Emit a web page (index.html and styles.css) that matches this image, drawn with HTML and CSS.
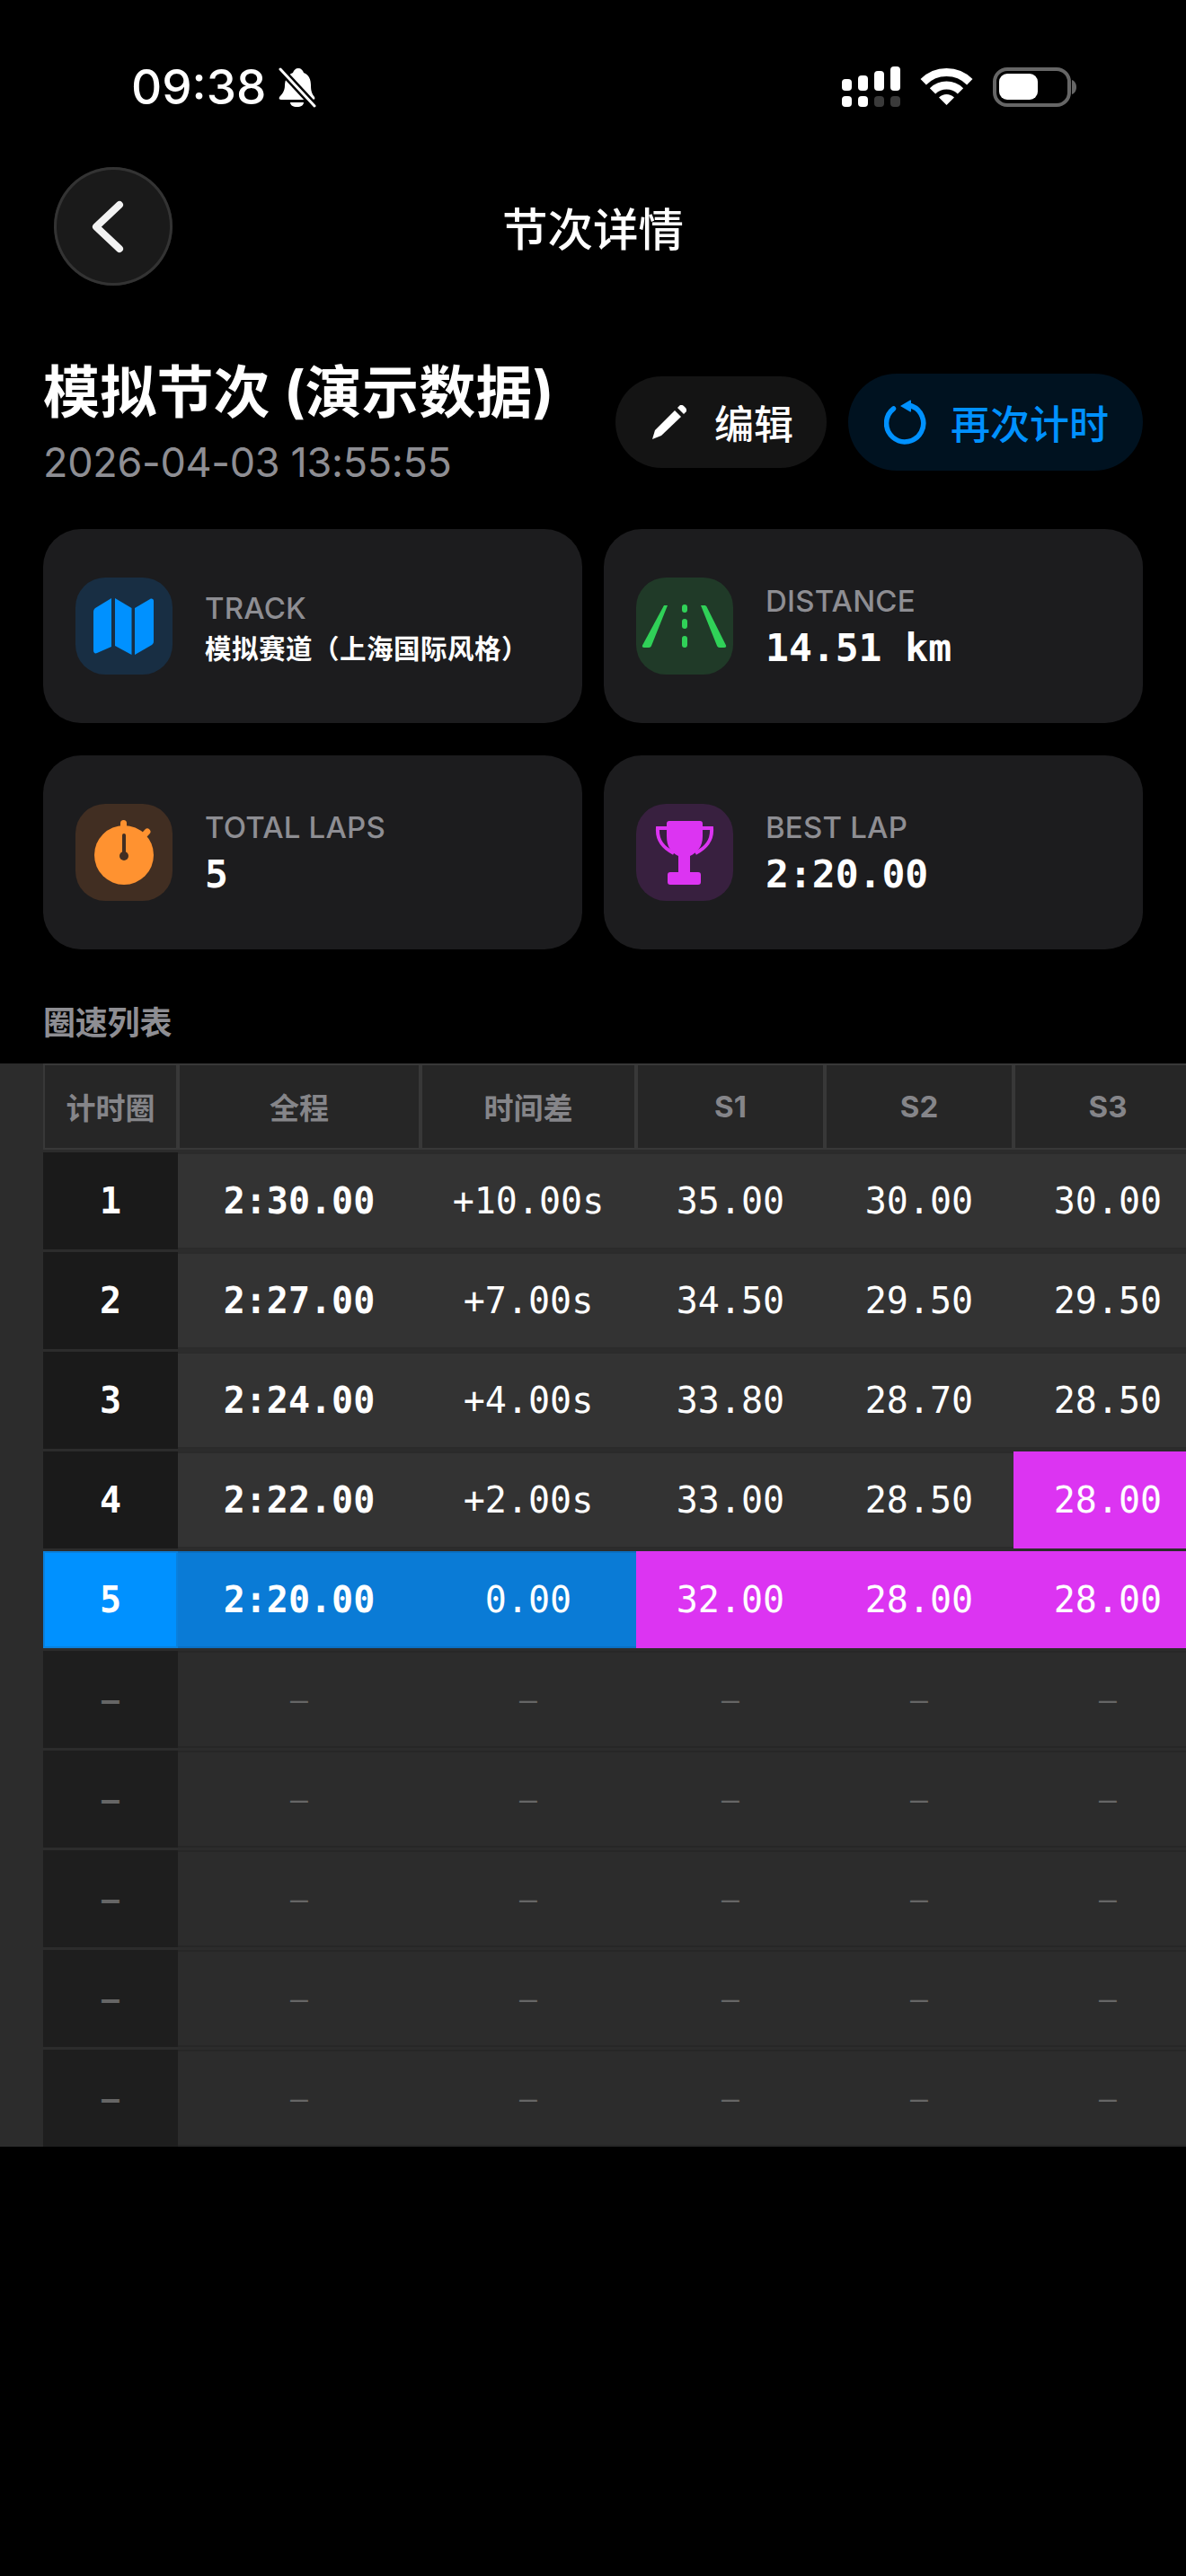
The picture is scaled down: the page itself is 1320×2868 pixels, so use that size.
FILE: index.html
```html
<!DOCTYPE html>
<html>
<head>
    <title>节次详情</title>
    <meta charset="UTF-8">
    <meta name="viewport" content="width=device-width, initial-scale=1">
    <link rel="stylesheet" href="styles.css">
</head>
<body>
    <div class="status-bar">
        <div class="status-left">
            <span class="status-time">09:38</span>
            <svg class="bell-icon" width="42" height="45" viewBox="0 0 42 45">
                <path d="M22 1c3 0 5 2 6 5 6 2 8 8 8 14 0 6 1 9 4 13 1 2 0 3-2 3H3c-2 0-3-1-2-3 3-3 6-7 6-13 0-6 3-12 9-14 1-3 3-5 6-5z" fill="#fff"/>
                <path d="M13 39h15c0 3-3 5-7.500 5S13 42 13 39z" fill="#fff"/>
                <path d="M1 1l40 43" stroke="#000" stroke-width="8"/>
                <path d="M2 2l38 41" stroke="#fff" stroke-width="3" stroke-linecap="round"/>
            </svg>
        </div>
        <svg class="status-right" width="261" height="46" viewBox="0 0 261 46">
            <rect x="0" y="14" width="11" height="13" rx="4" fill="#fff"/>
            <rect x="18" y="10" width="11" height="17" rx="4" fill="#fff"/>
            <rect x="36" y="5" width="11" height="22" rx="4" fill="#fff"/>
            <rect x="54" y="0" width="11" height="27" rx="4" fill="#fff"/>
            <rect x="0" y="33" width="11" height="12" rx="4" fill="#fff"/>
            <rect x="18" y="33" width="11" height="12" rx="4" fill="#fff"/>
            <rect x="36" y="33" width="11" height="12" rx="4" fill="#3a3a3a"/>
            <rect x="54" y="33" width="11" height="12" rx="4" fill="#3a3a3a"/>
            <path d="M90.700 17.200A36.500 36.500 0 0 1 142.300 17.200" fill="none" stroke="#fff" stroke-width="9"/>
            <path d="M101 27.400A22 22 0 0 1 132 27.400" fill="none" stroke="#fff" stroke-width="9"/>
            <path d="M116.500 43L108 34.500A12 12 0 0 1 125 34.500z" fill="#fff"/>
            <rect x="170" y="3" width="83" height="40" rx="14" fill="none" stroke="#666" stroke-width="4"/>
            <rect x="175" y="8" width="43" height="29" rx="9" fill="#fff"/>
            <path d="M256 15c3 1 5 4 5 8s-2 7-5 8z" fill="#666"/>
        </svg>
    </div>

    <div class="nav-bar">
        <div class="back-btn">
            <svg width="132" height="132" viewBox="0 0 132 132">
                <path d="M73 42L47 66.500 73 91" fill="none" stroke="#f2f2f2" stroke-width="8" stroke-linecap="round" stroke-linejoin="round"/>
            </svg>
        </div>
        <div class="nav-title">节次详情</div>
    </div>

    <div class="session-head">
        <div>
            <div class="session-title">模拟节次 (演示数据)</div>
            <div class="session-date">2026-04-03 13:55:55</div>
        </div>
        <div class="head-actions">
            <div class="action-btn edit-btn">
                <svg width="38" height="38" viewBox="0 0 38 38">
                    <path d="M0 38l3-10L25 6l7 7L10 34z" fill="#fff"/>
                    <path d="M28 3l3-3c1-1 3 0 5 2s3 4 2 5l-3 3z" fill="#fff"/>
                </svg>
                <span>编辑</span>
            </div>
            <div class="action-btn again-btn">
                <svg width="47" height="50" viewBox="0 0 47 50">
                    <path d="M29 6.500A20.600 20.600 0 1 1 10.500 10" fill="none" stroke="#0091ff" stroke-width="5.500" stroke-linecap="round"/>
                    <path d="M18 7L29 .5c.5-.3 1 0 1 .5v12c0 .5-.5.8-1 .5z" fill="#0091ff"/>
                </svg>
                <span>再次计时</span>
            </div>
        </div>
    </div>

    <div class="info-grid">
        <div class="info-card">
            <div class="info-icon icon-blue">
                <svg width="108" height="108" viewBox="0 0 108 108">
                    <path d="M20 38c0-2 1-3 2-4l18-11v54L24 84c-2 1-4 0-4-3z" fill="#0091ff"/>
                    <path d="M44 23l18.500 11v52L44 76z" fill="#0091ff"/>
                    <path d="M66 34l17-10c2-1 4 0 4 2v45c0 2-1 3-2 4L66 86z" fill="#0091ff"/>
                </svg>
            </div>
            <div class="info-text">
                <div class="info-label track-label">TRACK</div>
                <div class="info-name">模拟赛道（上海国际风格）</div>
            </div>
        </div>
        <div class="info-card">
            <div class="info-icon icon-green">
                <svg width="108" height="108" viewBox="0 0 108 108">
                    <path d="M31 31h4L17 76c-.5 1-1.500 2-3 2H9c-2 0-2.500-1-2-2.500z" fill="#30d158"/>
                    <path d="M72 31h4c1 0 2 .5 2.500 1.500L100 75.500c.5 1.500 0 2.500-2 2.500h-5c-1.500 0-2.500-1-3-2z" fill="#30d158"/>
                    <rect x="51" y="30" width="6" height="9" rx="3" fill="#30d158"/>
                    <rect x="51" y="46" width="6" height="11" rx="3" fill="#30d158"/>
                    <rect x="51" y="65" width="6" height="13" rx="3" fill="#30d158"/>
                </svg>
            </div>
            <div class="info-text">
                <div class="info-label">DISTANCE</div>
                <div class="info-value">14.51 km</div>
            </div>
        </div>
        <div class="info-card">
            <div class="info-icon icon-orange">
                <svg width="108" height="108" viewBox="0 0 108 108">
                    <rect x="50" y="18" width="7" height="12" rx="3.500" fill="#ff9230"/>
                    <rect x="75" y="27" width="7" height="11" rx="3.500" transform="rotate(45 78.500 32.500)" fill="#ff9230"/>
                    <circle cx="54" cy="57" r="33" fill="#ff9230"/>
                    <path d="M54 35v22" stroke="#412e22" stroke-width="4" stroke-linecap="round"/>
                    <circle cx="54" cy="58" r="5" fill="#412e22"/>
                </svg>
            </div>
            <div class="info-text">
                <div class="info-label">TOTAL LAPS</div>
                <div class="info-value">5</div>
            </div>
        </div>
        <div class="info-card">
            <div class="info-icon icon-purple">
                <svg width="108" height="108" viewBox="0 0 108 108">
                    <path d="M34 22q0-3 3-3h34q3 0 3 3v14c0 12-6 18-14 22v18h9q3 0 3 3v8q0 3-3 3H38q-3 0-3-3v-8q0-3 3-3h9V58C39 54 34 48 34 36z" fill="#dc34f2"/>
                    <path d="M36 27H24c-1 14 6 22 18 28M72 27h12c1 14-6 22-18 28" fill="none" stroke="#dc34f2" stroke-width="4"/>
                </svg>
            </div>
            <div class="info-text">
                <div class="info-label">BEST LAP</div>
                <div class="info-value">2:20.00</div>
            </div>
        </div>
    </div>

    <div class="section-label">圈速列表</div>

    <div class="lap-table">
        <div class="lap-head">
            <div>计时圈</div>
            <div>全程</div>
            <div>时间差</div>
            <div>S1</div>
            <div>S2</div>
            <div>S3</div>
        </div>
        <div class="lap-row">
            <div class="cell-num">1</div>
            <div class="cell-total">2:30.00</div>
            <div>+10.00s</div>
            <div>35.00</div>
            <div>30.00</div>
            <div>30.00</div>
        </div>
        <div class="lap-row">
            <div class="cell-num">2</div>
            <div class="cell-total">2:27.00</div>
            <div>+7.00s</div>
            <div>34.50</div>
            <div>29.50</div>
            <div>29.50</div>
        </div>
        <div class="lap-row">
            <div class="cell-num">3</div>
            <div class="cell-total">2:24.00</div>
            <div>+4.00s</div>
            <div>33.80</div>
            <div>28.70</div>
            <div>28.50</div>
        </div>
        <div class="lap-row">
            <div class="cell-num">4</div>
            <div class="cell-total">2:22.00</div>
            <div>+2.00s</div>
            <div>33.00</div>
            <div>28.50</div>
            <div class="cell-best">28.00</div>
        </div>
        <div class="lap-row is-best">
            <div class="cell-num">5</div>
            <div class="cell-total">2:20.00</div>
            <div>0.00</div>
            <div class="cell-best">32.00</div>
            <div class="cell-best">28.00</div>
            <div class="cell-best">28.00</div>
        </div>
        <div class="lap-row is-empty">
            <div class="cell-num">–</div>
            <div>–</div><div>–</div><div>–</div><div>–</div><div>–</div>
        </div>
        <div class="lap-row is-empty">
            <div class="cell-num">–</div>
            <div>–</div><div>–</div><div>–</div><div>–</div><div>–</div>
        </div>
        <div class="lap-row is-empty">
            <div class="cell-num">–</div>
            <div>–</div><div>–</div><div>–</div><div>–</div><div>–</div>
        </div>
        <div class="lap-row is-empty">
            <div class="cell-num">–</div>
            <div>–</div><div>–</div><div>–</div><div>–</div><div>–</div>
        </div>
        <div class="lap-row is-empty">
            <div class="cell-num">–</div>
            <div>–</div><div>–</div><div>–</div><div>–</div><div>–</div>
        </div>
    </div>
</body>
</html>
```

FILE: styles.css
```css
html, body {
    margin: 0;
    padding: 0;
    background: #000000;
}

body {
    width: 1320px;
    min-height: 2868px;
    overflow: hidden;
    color: #ffffff;
    font-family: "Inter", "Noto Sans CJK SC", sans-serif;
}

svg {
    display: block;
    flex-shrink: 0;
}

.status-bar {
    display: flex;
    justify-content: space-between;
    align-items: center;
    height: 50px;
    padding: 72px 122px 0 146px;
    margin-bottom: 64px;
}

.status-left {
    display: flex;
    align-items: center;
    gap: 14px;
}

.status-time {
    font-size: 53px;
    font-weight: 500;
    line-height: 50px;
}

.nav-bar {
    position: relative;
    display: flex;
    justify-content: center;
    align-items: center;
    height: 132px;
    margin-bottom: 79px;
}

.back-btn {
    position: absolute;
    left: 60px;
    top: 0;
    width: 132px;
    height: 132px;
    border-radius: 50%;
    background: #1a1a1a;
    box-shadow: inset 0 0 0 3px #333333;
}

.nav-title {
    font-size: 50.5px;
    font-weight: 500;
}

.session-head {
    display: flex;
    justify-content: space-between;
    align-items: center;
    padding: 0 48px;
}

.session-title {
    font-size: 63px;
    font-weight: 700;
    line-height: 78px;
    letter-spacing: .2px;
}

.session-date {
    margin-top: 13px;
    font-size: 45px;
    line-height: 54px;
    letter-spacing: -.3px;
    color: #8e8e93;
}

.head-actions {
    display: flex;
    align-items: center;
    gap: 24px;
}

.action-btn {
    display: flex;
    align-items: center;
    font-size: 44px;
    font-weight: 500;
}

.edit-btn {
    gap: 31px;
    height: 102px;
    padding: 0 37px 0 41px;
    border-radius: 51px;
    background: #141414;
}

.again-btn {
    gap: 27px;
    height: 108px;
    padding: 0 38px 0 40px;
    border-radius: 54px;
    background: #001220;
    color: #0091ff;
}

.info-grid {
    display: grid;
    grid-template-columns: 600px 600px;
    gap: 36px 24px;
    margin: 47px 48px 0;
}

.info-card {
    display: flex;
    align-items: center;
    gap: 36px;
    height: 216px;
    padding: 0 36px;
    box-sizing: border-box;
    border-radius: 42px;
    background: #1c1c1e;
}

.info-icon {
    width: 108px;
    height: 108px;
    border-radius: 33px;
}

.icon-blue { background: #182e43; }
.icon-green { background: #203a28; }
.icon-orange { background: #412e22; }
.icon-purple { background: #38203f; }

.info-label {
    font-size: 33px;
    font-weight: 500;
    line-height: 42px;
    letter-spacing: .2px;
    color: #8e8e93;
}

.track-label {
    margin-top: 4px;
}

.info-name {
    margin-top: 3px;
    font-size: 29.5px;
    font-weight: 700;
    line-height: 42px;
    letter-spacing: .5px;
    text-spacing-trim: space-all;
}

.info-value {
    margin-top: 5px;
    font-family: "DejaVu Sans Mono", monospace;
    font-size: 43px;
    font-weight: 700;
    line-height: 52px;
}

.section-label {
    margin: 58px 48px 21px;
    font-size: 36px;
    font-weight: 600;
    line-height: 48px;
    letter-spacing: -.2px;
    color: #8e8e93;
}

.lap-table {
    display: flex;
    flex-direction: column;
    gap: 3px;
    padding-left: 48px;
    background: #2c2c2c;
}

.lap-head, .lap-row {
    display: grid;
    grid-template-columns: 150px 270px 240px 210px 210px 210px;
    width: 1290px;
}

.lap-head div {
    display: flex;
    justify-content: center;
    align-items: center;
    height: 96px;
    box-sizing: border-box;
    border: 2px solid #383838;
    background: #262626;
    font-size: 33px;
    font-weight: 700;
    color: #858589;
}

.lap-row div {
    display: flex;
    justify-content: center;
    align-items: center;
    height: 108px;
    box-sizing: border-box;
    border-top: 2px solid #2b2b2b;
    border-bottom: 2px solid #2b2b2b;
    background: #333333;
    font-family: "DejaVu Sans Mono", monospace;
    font-size: 40px;
    color: #ffffff;
}

.lap-row .cell-num {
    border: none;
    background: #1a1a1a;
    font-weight: 700;
}

.lap-row .cell-total {
    font-weight: 700;
}

.lap-row .cell-best {
    border: none;
    background: #dc34f2;
}

.is-best div {
    border-color: #0a6fc2;
    background: #0a7bd6;
}

.is-best .cell-num {
    background: #0091ff;
    box-shadow: inset 0 0 0 2px #0a80dc;
}

.is-empty div {
    border-color: #272727;
    background: #2c2c2c;
    font-size: 33px;
    color: #666666;
}

.is-empty .cell-num {
    background: #1e1e1e;
}
```
